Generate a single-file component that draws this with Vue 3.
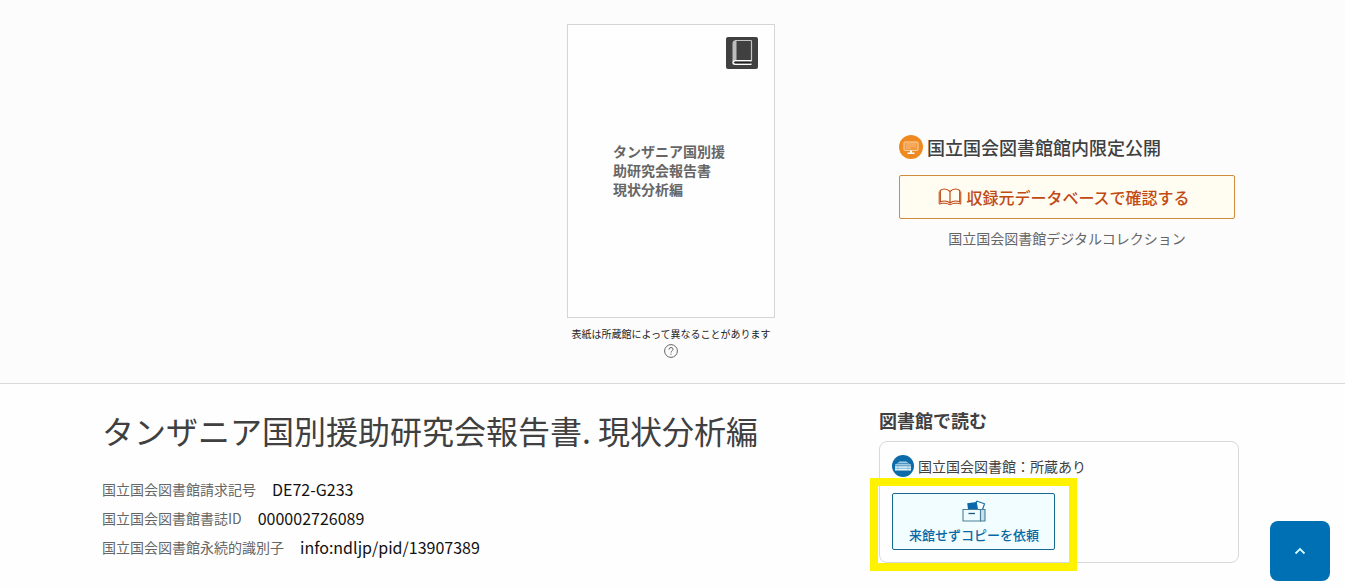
<script setup>
const coverTitle = 'タンザニア国別援助研究会報告書 現状分析編'
const identifiers = [
  { label: '国立国会図書館請求記号', value: 'DE72-G233' },
  { label: '国立国会図書館書誌ID', value: '000002726089' },
  { label: '国立国会図書館永続的識別子', value: 'info:ndljp/pid/13907389' },
]
const toTop = () => window.scrollTo({ top: 0, behavior: 'smooth' })
</script>

<template>
  <div class="page">
    <section class="hero">
      <figure class="cover-area">
        <div class="cover">
          <svg class="cover-icon" viewBox="0 0 32 32" aria-hidden="true">
            <rect width="32" height="32" rx="2" fill="#404040" />
            <path d="M9 3.500H24.800Q25.500 3.500 25.500 4.200V23.500H9" fill="none" stroke="#c4c4c4" stroke-width="1.200" />
            <path d="M9 3.300H10.500V23.200H8.700Q7.400 23.600 6.500 25V6Q6.700 3.600 9 3.300Z" fill="#bdbdbd" />
            <path d="M25.500 23.800H9Q7 24 7 25.500Q7 27.300 9.200 27.300H25.500" fill="none" stroke="#fff" stroke-width="1.400" />
            <path d="M9 25.500H24.500" stroke="#222" stroke-width="1.700" />
          </svg>
          <p class="cover-title">{{ coverTitle }}</p>
        </div>
        <figcaption>
          表紙は所蔵館によって異なることがあります
          <button class="help" type="button" aria-label="表紙について">
            <svg viewBox="0 0 14 14" aria-hidden="true">
              <circle cx="7" cy="7" r="6.400" fill="none" stroke="#666" stroke-width="1" />
              <path d="M5 5.600Q5 3.500 7 3.500Q9 3.500 9 5.300Q9 6.200 8 6.900Q7 7.500 7 8.600M7 9.700V10.800" fill="none" stroke="#666" stroke-width="1" />
            </svg>
          </button>
        </figcaption>
      </figure>

      <div class="access">
        <p class="access-heading">
          <svg class="round-icon" viewBox="0 0 24 24" aria-hidden="true">
            <circle cx="12" cy="12" r="12" fill="#f08a20" />
            <rect x="5" y="7" width="14" height="8.500" rx=".8" fill="#f39a40" stroke="#fbd3a8" stroke-width="1" />
            <path d="M7 9H17M7 11H17M7 13H12" stroke="#f8c795" stroke-width=".7" />
            <path d="M11 15.500H13V17.500H15.500V19H8.500V17.500H11Z" fill="#fff" />
          </svg>
          <span>国立国会図書館館内限定公開</span>
        </p>
        <a class="database-link" href="#database">
          <svg class="book-icon" viewBox="0 0 24 18" aria-hidden="true" fill="none" stroke="#bf4a14" stroke-linejoin="round">
            <path d="M12 3.500Q9.500 1 6.500 1Q4 1 2.300 2.500V14Q4 13 6.500 13Q9.700 13 12 15Q14.300 13 17.500 13Q20 13 21.700 14V2.500Q20 1 17.500 1Q14.500 1 12 3.500V15" stroke-width="1.200" />
            <path d="M1.200 3.500V16Q5 14.800 8 15.300Q10 15.500 11 16.600H13Q14 15.500 16 15.300Q19 14.800 22.800 16V3.500" stroke-width="1" />
          </svg>
          <span>収録元データベースで確認する</span>
        </a>
        <p class="access-source">国立国会図書館デジタルコレクション</p>
      </div>
    </section>

    <div class="details">
      <main class="record">
        <h1>タンザニア国別援助研究会報告書. 現状分析編</h1>
        <dl>
          <div v-for="item in identifiers" :key="item.label" class="identifier">
            <dt>{{ item.label }}</dt>
            <dd>{{ item.value }}</dd>
          </div>
        </dl>
      </main>

      <aside class="library">
        <h2>図書館で読む</h2>
        <div class="library-card">
          <p class="holding">
            <svg class="holding-icon" viewBox="0 0 22 22" aria-hidden="true">
              <circle cx="11" cy="11" r="11" fill="#0d6ca8" />
              <path d="M7.500 6.500H14.500L18 9.500H4Z" fill="#b8dcef" />
              <path d="M3 9.500H19V15.500H3Z" fill="#e6f5fc" />
              <path d="M5.500 8.300H16.500M3 10.800H19" stroke="#0d6ca8" stroke-width=".8" />
              <path d="M3 13.300H19" stroke="#5ba8d0" stroke-width=".8" />
              <path d="M6 9.500V15.500M16 9.500V15.500" stroke="#5ba8d0" stroke-width=".5" />
            </svg>
            <span>国立国会図書館：所蔵あり</span>
          </p>
          <div class="copy-request">
            <button class="copy-button" type="button">
              <svg class="copy-icon" viewBox="0 0 24 22" aria-hidden="true">
                <path d="M13.500 3L15 1.200L22.500 3.800L20.500 9.500" fill="#fff" stroke="#1a73aa" stroke-width="1.200" />
                <path d="M5.200 3.200L14.800 2L16 9.500H6Z" fill="#0868ab" />
                <path d="M1 9.500H18.500V21H1Z" fill="#effcff" stroke="#4c7e96" stroke-width="1.100" />
                <path d="M18.500 9.500H23V21H18.500Z" fill="#c5e2ee" stroke="#4c7e96" stroke-width="1.100" />
                <path d="M6.500 13.500H13" stroke="#175b80" stroke-width="1.300" />
              </svg>
              <span>来館せずコピーを依頼</span>
            </button>
            <span class="highlight" aria-hidden="true"></span>
          </div>
        </div>
      </aside>
    </div>

    <button class="to-top" type="button" aria-label="ページの先頭へ" @click="toTop">
      <svg viewBox="0 0 12 8" aria-hidden="true">
        <path d="M1.500 6.500L6 2L10.500 6.500" fill="none" stroke="#d2fbff" stroke-width="1.800" />
      </svg>
    </button>
  </div>
</template>

<style>
body {
  margin: 0;
  background: #fefefe;
}
</style>

<style scoped>
.page {
  color: #404040;
  font-family: "Noto Sans CJK JP", sans-serif;
  font-size: 14px;
  line-height: 20px;
}

p, h1, h2, dl, dd, figure {
  margin: 0;
}

button {
  font-family: inherit;
  cursor: pointer;
}

svg {
  display: block;
  flex: none;
}

.hero {
  display: grid;
  grid-template-columns: 1fr 208px 1fr;
  align-items: center;
  padding: 24px 106px 25px 103px;
  border-bottom: 1px solid #d9d9d9;
  background: #fcfcfc;
}

.cover-area {
  grid-column: 2;
}

.cover {
  box-sizing: border-box;
  display: flex;
  flex-direction: column;
  aspect-ratio: 208 / 294;
  padding: 12px 16px;
  border: 1px solid #d5d5d5;
  background: #fefefe;
}

.cover-icon {
  width: 32px;
  height: 32px;
  align-self: flex-end;
}

.cover-title {
  width: 112px;
  margin: 73px auto 0 29px;
  color: #666;
  font-weight: 700;
  line-height: 19px;
}

figcaption {
  display: flex;
  flex-direction: column;
  align-items: center;
  padding-top: 8px;
  color: #222;
  font-size: 10px;
  line-height: 16px;
  white-space: nowrap;
}

.help {
  width: 14px;
  height: 14px;
  margin-top: 2px;
  padding: 0;
  border: 0;
  background: none;
}

.access {
  grid-column: 3;
  justify-self: end;
  width: 336px;
  margin-right: 4px;
}

.access-heading {
  display: flex;
  align-items: center;
  gap: 4px;
  font-size: 18px;
  font-weight: 500;
  line-height: 24px;
}

.round-icon {
  width: 24px;
  height: 24px;
}

.database-link {
  box-sizing: border-box;
  display: flex;
  align-items: center;
  justify-content: center;
  gap: 4px;
  min-height: 44px;
  margin-top: 16px;
  padding-right: 6px;
  border: 1px solid #d08b3c;
  border-radius: 2px;
  background: #fffcf2;
  color: #bf4a14;
  font-size: 16px;
  font-weight: 500;
  text-decoration: none;
}

.book-icon {
  width: 24px;
  height: 18px;
}

.access-source {
  margin-top: 9px;
  color: #666;
  text-align: center;
}

.details {
  display: grid;
  grid-template-columns: 1fr 360px;
  gap: 24px;
  padding: 23px 106px 24px 102px;
}

h1 {
  font-size: 32px;
  font-weight: 400;
  line-height: 46px;
}

dl {
  display: grid;
  gap: 5px;
  margin-top: 24px;
}

.identifier {
  display: flex;
  align-items: center;
  gap: 16px;
}

dt {
  color: #666;
}

dd {
  color: #111;
  font-size: 16px;
  line-height: 24px;
}

h2 {
  font-size: 18px;
  font-weight: 700;
  line-height: 26px;
}

.library-card {
  margin-top: 8px;
  padding: 12px;
  border: 1px solid #d9d9d9;
  border-radius: 8px;
}

.holding {
  display: flex;
  align-items: center;
  gap: 4px;
  line-height: 24px;
}

.holding-icon {
  width: 22px;
  height: 22px;
}

.copy-request {
  position: relative;
  width: fit-content;
  margin-top: 15px;
}

.copy-button {
  display: flex;
  flex-direction: column;
  align-items: center;
  gap: 2px;
  padding: 6px 15px 3px 16px;
  border: 1px solid #17698f;
  border-radius: 2px;
  background: #f2fdff;
  color: #0868a5;
  font-size: 13px;
  font-weight: 500;
  line-height: 22px;
}

.copy-icon {
  width: 24px;
  height: 22px;
}

.highlight {
  position: absolute;
  inset: -15px -22px -21px;
  border: 8px solid #fff200;
  pointer-events: none;
}

.to-top {
  position: fixed;
  right: 15px;
  bottom: 7px;
  display: grid;
  place-items: center;
  width: 60px;
  height: 60px;
  padding: 0;
  border: 0;
  border-radius: 8px;
  background: #0070b5;
}

.to-top svg {
  width: 12px;
  height: 8px;
}
</style>
